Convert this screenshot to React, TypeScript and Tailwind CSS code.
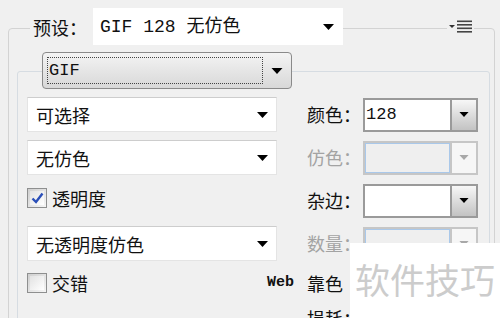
import React from "react";

function Tri({ color = "#000", w = 11, h = 6 }: { color?: string; w?: number; h?: number }) {
  return (
    <svg width={w} height={h} viewBox="0 0 11 6">
      <path d="M0 0H11L5.5 6Z" fill={color} />
    </svg>
  );
}

function FlatCombo({ text }: { text: string }) {
  return (
    <div className="w-[250px] h-[35px] flex items-center justify-between bg-white border border-[#e4e4e4] border-t-[#cdcdcd] pl-[8px] pr-[8px]">
      <span className="leading-none">{text}</span>
      <Tri />
    </div>
  );
}

function Combo({ text = "", disabled = false }: { text?: string; disabled?: boolean }) {
  if (disabled) {
    return (
      <div className="ml-[2px] w-[115px] h-[34px] flex border-2 border-[#c6c6c6] bg-[#f0f0f0]">
        <div className="flex-1 border border-[#a9c8ea] bg-[#efefef]" />
        <div className="w-[26px] border-l-2 border-[#c6c6c6] bg-[#f6f6f6] flex items-center justify-center">
          <Tri color="#a8a8a8" w={10} h={5} />
        </div>
      </div>
    );
  }
  return (
    <div className="ml-[2px] w-[115px] h-[34px] flex border-2 border-[#9a9a9a] bg-white">
      <div className="flex-1 flex items-center pl-[1px] font-[Liberation_Mono,monospace] text-[17px]">{text}</div>
      <div className="w-[26px] border-l-2 border-[#9a9a9a] bg-linear-to-b from-[#f7f7f7] to-[#c3c3c3] flex items-center justify-center">
        <Tri w={10} h={5} />
      </div>
    </div>
  );
}

function Check({ checked, label }: { checked?: boolean; label: string }) {
  return (
    <div className="flex items-center gap-[5px]">
      <div className="w-[20px] h-[20px] border border-[#8e8f8f] bg-linear-to-br from-[#cfcfcf] to-[#f6f6f6] p-[2px]">
        <div className="w-full h-full bg-linear-to-br from-[#e2e2e2] to-[#ffffff] flex items-center justify-center">
          {checked && (
            <svg width="13" height="12" viewBox="0 0 13 12">
              <path d="M1.5 6.5L5 10L11.5 1.5" fill="none" stroke="#2b4fb8" strokeWidth="2.4" />
            </svg>
          )}
        </div>
      </div>
      <span className="leading-none">{label}</span>
    </div>
  );
}

function Label({ children, disabled = false }: { children: React.ReactNode; disabled?: boolean }) {
  return (
    <div className={`w-[84px] flex justify-end items-center whitespace-nowrap ${disabled ? "text-[#a3a3a3]" : "text-[#111]"}`}>
      {children}
    </div>
  );
}

export default function App() {
  return (
    <div className="relative w-[500px] h-[318px] overflow-hidden bg-[#f0f0f0] pt-[28px] pl-[8px] pr-[5px] font-[Noto_Sans_CJK_SC,sans-serif] text-[18px] text-[#111]">
      <div className="h-[340px] border border-[#d3d3d3] rounded-[4px] pl-[8px] pr-[4px]">
        {/* header */}
        <div className="-mt-[21px] h-[37px] flex items-center">
          <div className="ml-[13px] bg-[#f0f0f0] pl-[3px] pr-[6px] leading-[26px]">预设：</div>
          <div className="w-[250px] h-[37px] bg-white flex items-center justify-between pl-[7px] pr-[9px]">
            <span className="font-[Liberation_Mono,Noto_Sans_CJK_SC,monospace] text-[18px] leading-none whitespace-pre">GIF 128 无仿色</span>
            <Tri />
          </div>
          <div className="flex-1" />
          <div className="mr-[16px] bg-[#f0f0f0] w-[27px] h-[14px] flex items-center justify-center">
            <svg width="25" height="13" viewBox="0 0 25 13">
              <path d="M1 5H7L4 8Z" fill="#333" />
              <rect x="9" y="0.5" width="15" height="1.6" fill="#444" />
              <rect x="9" y="4" width="15" height="1.6" fill="#444" />
              <rect x="9" y="7.5" width="15" height="1.6" fill="#444" />
              <rect x="9" y="11" width="15" height="1.6" fill="#444" />
            </svg>
          </div>
        </div>

        {/* inner group */}
        <div className="mt-[26px] h-[300px] border border-[#d6dce2] rounded-[3px] pl-[9px]">
          <div className="-mt-[20px] ml-[15px] w-[250px] h-[37px] rounded-[4px] border border-[#8a8a8a] bg-linear-to-b from-[#f4f4f4] to-[#d8d8d8] flex items-center">
            <div className="ml-[4px] w-[216px] h-[27px] border border-dotted border-[#444] flex items-center pl-[1px] font-[Liberation_Mono,monospace] text-[17px] leading-none">
              GIF
            </div>
            <div className="flex-1 flex justify-center">
              <Tri w={12} h={6} />
            </div>
          </div>

          <div className="mt-[8px] flex flex-col gap-[8px]">
            <div className="h-[35px] flex items-center">
              <FlatCombo text="可选择" />
              <Label>颜色：</Label>
              <Combo text="128" />
            </div>
            <div className="h-[35px] flex items-center">
              <FlatCombo text="无仿色" />
              <Label disabled>仿色：</Label>
              <Combo disabled />
            </div>
            <div className="h-[35px] flex items-center">
              <div className="w-[250px] h-[35px] pt-[5px]">
                <Check checked label="透明度" />
              </div>
              <Label>杂边：</Label>
              <Combo />
            </div>
            <div className="h-[35px] flex items-center">
              <FlatCombo text="无透明度仿色" />
              <Label disabled>数量：</Label>
              <Combo disabled />
            </div>
            <div className="h-[28px] flex items-start">
              <div className="w-[250px] pt-[4px]">
                <Check label="交错" />
              </div>
              <div className="w-[84px] h-[28px] flex justify-end items-center whitespace-nowrap pr-[18px]">
                <span className="font-[Liberation_Mono,monospace] font-bold text-[15px] mr-[13px]">Web</span>
                <span>靠色</span>
              </div>
            </div>
            <div className="h-[28px] flex items-start">
              <div className="w-[250px]" />
              <Label>损耗：</Label>
            </div>
          </div>
        </div>
      </div>

      {/* watermark overlay */}
      <div className="absolute left-[350px] top-[243px] right-0 bottom-0 bg-white flex items-center pl-[5px] pb-[4px]">
        <span className="text-[35px] leading-none text-[#cccccc] whitespace-nowrap">软件技巧</span>
      </div>
    </div>
  );
}
